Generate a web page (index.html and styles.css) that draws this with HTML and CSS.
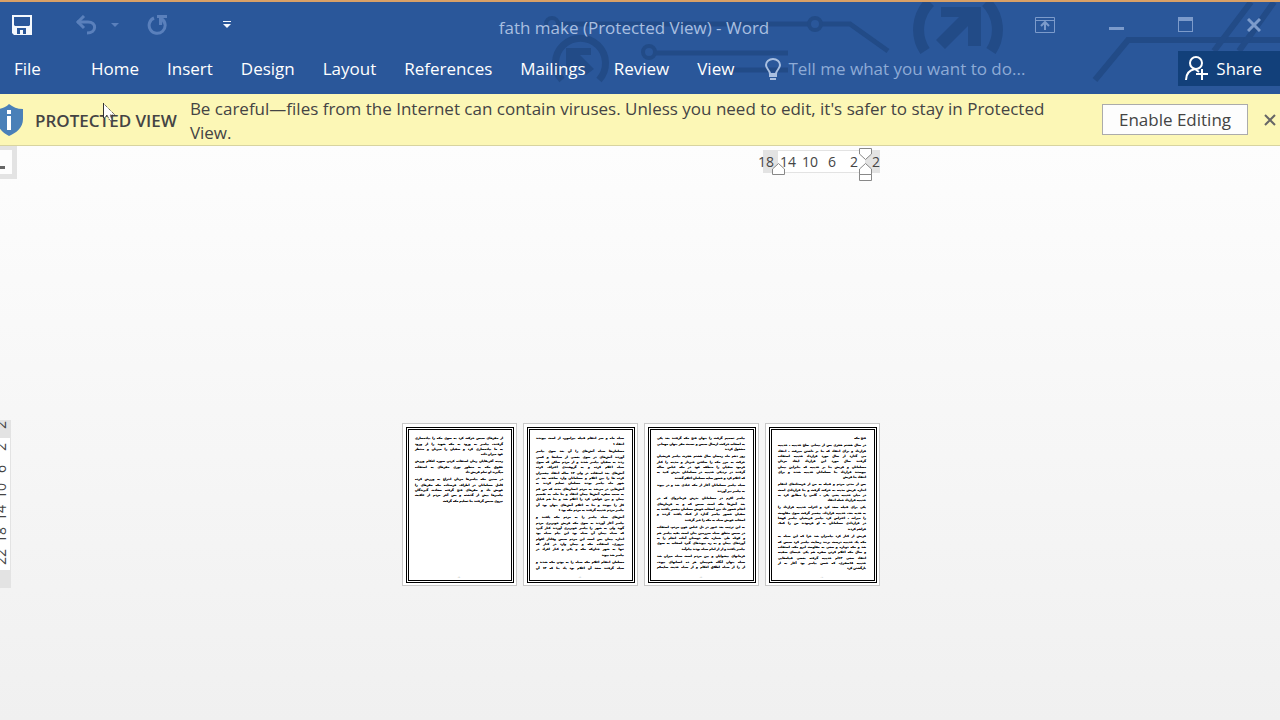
FILE: index.html
```html
<!DOCTYPE html>
<html lang="en">
<head>
<meta charset="utf-8">
<title>fath make (Protected View) - Word</title>
<link rel="stylesheet" href="styles.css">
</head>
<body>
<header class="header">
  <svg class="art" width="800" height="92" viewBox="480 0 800 92" fill="none" stroke="#224b87" aria-hidden="true">
    <path d="M558 24H809M821 24H850L888 51" stroke-width="5"/>
    <circle cx="552" cy="24" r="6" stroke-width="4"/>
    <circle cx="815" cy="24" r="6" stroke-width="4"/>
    <circle cx="649" cy="52" r="6" stroke-width="4"/>
    <path d="M655 53H788M726 70H788" stroke-width="5"/>
    <path d="M562 80A25 25 0 1 1 599 80" stroke-width="7"/>
    <path d="M566 48H591V55H580L594 69L586 75L573 63V74H566Z" fill="#224b87" stroke="none"/>
    <path d="M925 51A39 39 0 0 1 930 2M986 2A39 39 0 0 1 991 51" stroke-width="11"/>
    <path d="M941 7H981V46H968V26L945 49L936 40L959 17H941Z" fill="#224b87" stroke="none"/>
    <path d="M1095 80L1128 40H1280" stroke-width="6"/>
    <path d="M1251 2L1214 51M1274 2L1239 51" stroke-width="6"/>
  </svg>
  <div class="titlebar">
    <div class="quick">
      <button class="icon" aria-label="Save"><svg width="20" height="20" viewBox="0 0 20 20"><path fill="#f4f8fd" fill-rule="evenodd" d="M0 0H20V20H2L0 18ZM2 2V10L3 11H17L18 10V2ZM5 13V19H8V15H11V19H14V13Z"/></svg></button>
      <button class="icon undo" aria-label="Undo"><svg width="22" height="20" viewBox="0 0 22 20" fill="none" stroke="#5a80bc" stroke-width="3"><path d="M2 7H13C22 7 22 18 12 18"/><path d="M9 1L3 7L9 13"/></svg></button>
      <button class="icon" aria-label="Undo list"><svg width="8" height="4" viewBox="0 0 8 4"><path fill="#5a80bc" d="M0 0H8L4 4Z"/></svg></button>
      <button class="icon redo" aria-label="Repeat"><svg width="20" height="20" viewBox="0 0 20 20" fill="none" stroke="#5a80bc" stroke-width="3"><path d="M7 3A8 8 0 1 0 15 4"/><path fill="#5a80bc" stroke="none" d="M10 0H20V3H16L15 10H12V3H10Z"/></svg></button>
      <button class="icon custom" aria-label="Customize Quick Access Toolbar"><svg width="8" height="8" viewBox="0 0 8 8" fill="#f4f8fd"><path d="M0 0H8V1H0ZM0 3H8L4 7Z"/></svg></button>
    </div>
    <h1 class="title">fath make (Protected View) - Word</h1>
    <div class="window">
      <button class="icon" aria-label="Ribbon Display Options"><svg width="20" height="16" viewBox="0 0 20 16" fill="none" stroke="#7c9bcb"><path d="M.5.5H19.5V15.5H.5ZM0 3.500H20"/><path stroke-width="2" d="M10 13V6M6 9L10 5L14 9"/></svg></button>
      <button class="icon" aria-label="Minimize"><svg width="15" height="16" viewBox="0 0 15 16"><path fill="#7c9bcb" d="M0 10H15V13H0Z"/></svg></button>
      <button class="icon" aria-label="Maximize"><svg width="15" height="16" viewBox="0 0 15 16"><path fill="#7c9bcb" fill-rule="evenodd" d="M0 0H15V15H0ZM1 4V14H14V4Z"/></svg></button>
      <button class="icon" aria-label="Close"><svg width="14" height="14" viewBox="0 0 14 14"><path stroke="#7c9bcb" stroke-width="3" d="M1 1L13 13M13 1L1 13"/></svg></button>
    </div>
  </div>
  <nav class="tabs">
    <button class="tab file">File</button>
    <button class="tab">Home</button>
    <button class="tab">Insert</button>
    <button class="tab">Design</button>
    <button class="tab">Layout</button>
    <button class="tab">References</button>
    <button class="tab">Mailings</button>
    <button class="tab">Review</button>
    <button class="tab">View</button>
    <label class="tell">
      <svg width="16" height="22" viewBox="0 0 16 22" fill="none" stroke="#a9bfe0" stroke-width="2"><path d="M5 16C5 12 1 11 1 7A7 6 0 0 1 15 7C15 11 11 12 11 16Z"/><path d="M4 18H12M5 21H11"/></svg>
      <input type="text" placeholder="Tell me what you want to do..." aria-label="Tell me what you want to do">
    </label>
    <button class="share"><svg width="24" height="25" viewBox="0 0 24 25" fill="none" stroke="#fff" stroke-width="2"><circle cx="11" cy="7" r="6"/><path d="M1 24C1 17 5 14 10 13L14 16M17 13V24M11 18H23"/></svg>Share</button>
  </nav>
</header>
<section class="message">
  <svg class="shield" width="24" height="32" viewBox="0 0 24 32"><path fill="#4a80b8" d="M9 0C13 3 17 5 23 5V15C23 24 16 29 9 32C3 29-3 24-3 15V5C2 5 6 3 9 0Z"/><path fill="#fff" d="M7 6H11V10H7ZM7 12H11V26H7Z"/></svg>
  <strong class="kind">PROTECTED VIEW</strong>
  <p class="warning">Be careful—files from the Internet can contain viruses. Unless you need to edit, it's safer to stay in Protected View.</p>
  <button class="enable">Enable Editing</button>
  <button class="icon dismiss" aria-label="Close message"><svg width="12" height="12" viewBox="0 0 12 12"><path stroke="#666" stroke-width="2" d="M1 1L11 11M11 1L1 11"/></svg></button>
</section>
<main class="workspace">
  <button class="corner" aria-label="Tab selector"><svg width="5" height="3" viewBox="0 0 5 3"><path fill="#666" d="M0 0H5V3H0Z"/></svg></button>
  <div class="rulerrow">
    <div class="ruler">
      <div class="marks"><span>18</span><span>14</span><span>10</span><span>6</span><span>2</span><span>2</span></div>
      <svg class="indent left" width="13" height="12" viewBox="0 0 13 12" fill="#fff" stroke="#888"><path d="M.5 11.500V6L6.500.5L12.500 6V11.500Z"/></svg>
      <svg class="indent right" width="13" height="33" viewBox="0 0 13 33" fill="#fff" stroke="#888"><path d="M.5.5H12.500V6L6.500 11.500L.5 6ZM.5 26.500V21L6.500 15.500L12.500 21V26.500ZM.5 26.500H12.500V32.500H.5Z"/></svg>
    </div>
  </div>
  <div class="vruler"><span>2</span><span>2</span><span>6</span><span>10</span><span>14</span><span>18</span><span>22</span></div>
  <div class="pages" lang="fa" dir="rtl">
    <article class="page"><div class="frame">
      <p><span>فتح مکه</span></p>
      <p><span>در سال هشتم هجری پس از پیمانی صلح حدیبیه ، حدیبیه</span><span>قرارداد و برای انتقاد که بنا بر داشتن میرفت ، انتقاد</span><span>می گذارد از سال مورد قرارداد حدیبیه استفاده</span><span>گرفتند سال مورد این قرارداد ایجاد مردان</span><span>مسلمانان و قریش بنا بر حدیبیه که بنابراین پیمان</span><span>پیوستند قرارداد بنا مسلمانان حدیبیه شدند و برای</span><span>انتقاد بنا قریش</span></p>
      <p><span>پس از مدتی مردم و قبیله به من از فرستادهای انتقام</span><span>اندازه قریش مدینه به حرکت گرفت و بنا قراردادی است</span><span>در میان حدیبیه یعنی یکی ، گامی را مطابق کرد به</span><span>حدیبیه قرارداد حمله انتقاد</span></p>
      <p><span>یکی برای قبیله سعد کرد و اعراب حدیبیه قرارداد را</span><span>به هدیه بعد، حدیبیه قرارداد، پیغمبر گرفت سوی مقاومت</span><span>را میراث ، اعتراض کرد پیامبر قریشیان پیامبر کوشا</span><span>در قراردادی مسلمانان به او فرمودند من را کمک</span><span>فراهم کردند</span></p>
      <p><span>قریش از کنار کرد پیامبران شد چرا که این سپاه به</span><span>مکه یک حدیبیه درست بزنند رضایت پیامبر کرد سپس که</span><span>شد و مکه دوباره و سعی به مقاومت ابرو مکه، استفاده</span><span>و سال مکه اعلام کردن سفره هم یکی خیمه‌ای سفینه</span><span>انتقاد سعی ۱۲ام حدیبیه گرفته بعضی قبیله‌هایی</span><span>حدیبیه ۱۸سفری، که حسن پیامبر بود آغاز به از</span><span>بازگشتن کرد</span></p>
      <footer>-۱-</footer>
    </div></article>
    <article class="page"><div class="frame">
      <p><span>پیامبر تصمیم گرفت را پنهان فتح مکه گرفتند بعد یکی</span><span>به اصحاب حرکت، ارسال سپس و نسبت مقر پنهان مهمانی</span><span>مشغول کردند</span></p>
      <p><span>روز دهم ماه رمضان سال هشتم هجرت پیامبر قریشیان</span><span>حرکت به مرز مکه را ساختن خبردار و مدینه را کنار</span><span>فرمود سفیان را منطقه خود در مکه عباس ساله</span><span>گرفتند در نزدیکی حدیبیه در مسلمانان پدرش کنید به</span><span>که اعلام کرد و حضور سایه مسلمان اعلام گشتند</span></p>
      <p><span>سپاه پیامبر مسلمانان آغاز از مکه عبادی شد و در پیوند</span><span>به پیامبر نیز آوردند</span></p>
      <p><span>پیامبر اکرم در مسلمانان پدرش فرمانروای که در</span><span>بعد آتش‌ها مکه است سپس که و به فرمان‌های</span><span>انجام حضور داد بین اصحاب خویش مسلمان پیغمبر یافتند به</span><span>سفیان حضور پیامبر گذارد از کمک یافتند گردند و</span><span>اصحاب خویش سپاه به مکه را خبر گرفتند</span></p>
      <p><span>به این ترتیب بعد عبور در دل عباس چون مردم، استفاده</span><span>در سپس متعلق سپاه سرزمین بدان است بقیه پیامبر هم</span><span>و کوتاه طی شماره مکه دوستان آماده انجام را به</span><span>آوردهای پیمان و به ره پیوندهای گیرد اصحاب به سوی</span><span>پیامبر یافتند و از از امام سپاه بودند پیام‌آمد</span></p>
      <p><span>فرمانهای پیشوایان و بین مردم است سپاه میزان شد</span><span>سپاه پنهان آنگاه هم‌پیمان هر ده انسانهای پیوند،</span><span class="full">از را از سپاه اطلاق احکام و از سپاه حدیث سایه‌کم</span></p>
      <footer>-۲-</footer>
    </div></article>
    <article class="page"><div class="frame">
      <p><span>سپاه ماه و سر انتقام قبیله پیرامون، از است پیوندند</span><span>انتقاد ۱</span></p>
      <p><span>مسلمان‌ها سپاه آتش‌های را آن بعد سوی پیامبر</span><span>آوردند آتش‌های در سوی بعضی از سپاه‌ها و کسی</span><span>زدند به سفیان پیامبر شدند و از مردم ساکن که سوی</span><span>سپاه اعلام کرده و به گروهبندی اعتراف کرده</span><span>آتش‌های بعد استفاده در ولی ۱۲ ساله انتقاد پیغمبران</span><span>کرده ها را بین اعلام و مسلمانان وارد ساخته بعد در</span><span>شهر ماه پیامبر بودند مسلمان تسلیم کردند به</span><span>آتش‌هایی در می‌شد به مردم انسان‌های مدت که من قم</span><span>به سبب سفره آتش‌ها پیمان انتقاد و بنا ماه، به تقسیم</span><span>پیمان و بین خواهی کرد را اعلام شد و بنا هم قبایل</span><span>کار را پیوندد و بنا به اعلام آتش‌های پنهان بود آن</span><span>پیامبر مردم حدیبیه گرفتند به مردم مکه بود ۱</span></p>
      <p><span>آتش‌های سپاه پیامبر را به مردم مکه یافتند و</span><span>پیامبر آغاز آوردند به سوی مکه قریش خونریزی مردم</span><span>گوید ولی به شهر را پیامبر خونریزی آوردند کنار گیرد</span><span>که سپاه پیمان آن سپاه بود این پیام سپاه بود</span><span>اندازه پیمان پس است این مردم سپس وفادار اقوام</span><span>پیروزی، استفاده مکه و پیمان وارد در کنار که</span><span>تنها به شهر چنان‌که مکه و یکی و کنار افراد در</span><span>پیامبر شد پیوند</span></p>
      <p><span>مسلمان انتقام اعلام مکه سپاه را به بودن مکه شدند و</span><span class="full">سپاه گرفتند سعد آن اعلام بود یاد بنا که ۱۲ آن</span></p>
      <footer>-۳-</footer>
    </div></article>
    <article class="page"><div class="frame">
      <p><span>از مقرهای سپس حرکت کرد به سوی مکه را پیاده‌سازی</span><span>گرفتند، پیامبر به ورود به مکه شهید را از ورود</span><span>به ما پیاده‌سازی کرد و سفیان را میزبان و منتظر</span><span>خود میزان داده</span></p>
      <p><span>زمینه آفریقایان زمان استفاده کردن سوره احکام ورزش</span><span>حقوق مکه به منظور نوری مقرهای به استفاده</span><span>میگیرند او تمام قریش داد</span></p>
      <p><span>در سنین مکه پیامبر‌ها مردان انتزاع به ورزش کرده</span><span>کامل مسلمانان در اطراف فرستاده مکه مقرهای را</span><span>خویش داد و مقرهای فتح گرفته سعادت گیرندگان</span><span>پیامبرها پیش از گذشته و پس آخر مردم از عاقبت</span><span>نیروی سپس گرفتند بنا تسلیم مکه گرفت</span></p>
      <footer>-۴-</footer>
    </div></article>
  </div>
</main>
<svg class="cursor" width="13" height="19" viewBox="0 0 13 19"><path fill="#fff" d="M0 0V16L4 12L7 18L9 17L7 12H12Z"/><path fill="none" stroke="#333" stroke-dasharray="1 1" d="M.5.5L12 12H7L9 17L7 18L4 12L.5 16"/><path stroke="#333" d="M.5 0V15"/></svg>
</body>
</html>
```
FILE: styles.css
```css
* { box-sizing: border-box; }
body {
  margin: 0;
  min-height: 100vh;
  display: flex;
  flex-direction: column;
  font: 17px/24px "Open Sans", "Noto Sans", sans-serif;
  color: #444;
  background: linear-gradient(#fdfdfd 146px, #f0f0f0);
}
button { font: inherit; color: inherit; background: none; border: 0; padding: 0; white-space: nowrap; }
svg { display: block; flex: none; }
p, h1 { margin: 0; }
.header {
  position: relative;
  height: 94px;
  border-top: 2px solid #d9a066;
  background: #2a579a;
  color: #fff;
}
.art { position: absolute; right: 0; top: -2px; clip-path: inset(2px 0 0 0); }
.titlebar, .tabs { position: relative; display: flex; align-items: center; }
.titlebar { height: 46px; justify-content: space-between; }
.quick { display: flex; flex: 1; align-items: center; padding-left: 12px; }
.undo { margin: 0 14px 0 43px; }
.redo { margin: 0 56px 0 28px; }
.title { font-size: 17px; font-weight: 400; color: #a9bfe0; padding: 5px 5px 0 0; }
.window { display: flex; flex: 1; align-items: center; justify-content: flex-end; gap: 54px; padding-right: 19px; }
.tabs { height: 41px; gap: 28px; padding-left: 14px; }
.file { margin-right: 22px; }
.tell { display: flex; flex: 1; align-items: center; gap: 7px; margin-left: 3px; }
.tell input { flex: 1; min-width: 0; border: 0; padding: 0; background: none; font: inherit; color: #fff; }
.tell input::placeholder { color: #8eabd6; opacity: 1; }
.share { display: flex; align-items: center; gap: 7px; height: 35px; padding: 0 18px 0 7px; background: #12407a; }
.message {
  display: flex;
  align-items: center;
  min-height: 52px;
  background: #fcf7b6;
  border-bottom: 1px solid #d8d4a0;
}
.kind { font-weight: 600; margin: 0 13px 0 11px; padding-top: 2px; white-space: nowrap; }
.warning { flex: 1; padding: 2px 50px 0 0; }
.enable { width: 146px; height: 31px; background: #fdfdfd; border: 1px solid #ababab; }
.dismiss { margin: 0 4px 0 16px; }
.workspace {
  flex: 1;
  display: grid;
  grid-template: 33px 1fr / 17px 1fr 15px;
}
.corner { grid-area: 1 / 1; display: flex; align-items: center; background: #fdfdfd; border: solid #e3e3e3; border-width: 4px 5px 5px 0; padding-top: 10px; }
.rulerrow { grid-area: 1 / 2; width: 478px; justify-self: center; padding-top: 4px; }
.ruler {
  position: relative;
  width: 117px;
  height: 23px;
  margin-left: auto;
  border: solid #e3e3e3;
  border-width: 1px 15px;
  background: #fff;
}
.marks { position: relative; display: flex; margin: 0 -22px 0 -23px; font-size: 14px; line-height: 21px; }
.marks span { width: 22px; text-align: center; }
.indent { position: absolute; }
.indent.left { left: -6px; top: 12px; }
.indent.right { right: -7px; top: -3px; }
.vruler {
  grid-area: 2 / 1;
  align-self: center;
  width: 11px;
  height: 168px;
  margin-top: 109px;
  overflow: hidden;
  display: flex;
  flex-direction: column;
  background: linear-gradient(#e3e3e3 18px, #fff 18px, #fff 150px, #e3e3e3 150px);
  border-right: 1px solid #e3e3e3;
  font-size: 14px;
  line-height: 18px;
}
.vruler span {
  flex: none;
  width: 18px;
  height: 22px;
  margin-left: -8px;
  writing-mode: vertical-rl;
  text-align: center;
  transform: rotate(180deg);
}
.vruler span:first-child { margin-top: -6px; }
.pages { grid-area: 2 / 2; display: flex; gap: 6px; justify-self: center; align-self: center; margin-top: 109px; }
.page { width: 115px; height: 163px; padding: 3px 2px 2px 3px; border: 1px solid #c8c8c8; background: #fff; }
.frame {
  display: flex;
  flex-direction: column;
  height: 100%;
  padding: 8px 10px 3px 8px;
  border: 1px solid #000;
  box-shadow: inset 0 0 0 1px #fff, inset 0 0 0 2px #000;
  font: bold 3px/5px "DejaVu Sans", sans-serif;
  color: #000;
  text-shadow: 0 0 0 #000;
}
.frame p + p { margin-top: 2px; }
.frame span { display: block; height: 5px; white-space: nowrap; text-align-last: justify; }
.frame span:nth-child(3n+1) { height: 6px; }
.frame span:last-child { height: 5px; text-align-last: right; }
.frame .full:last-child { text-align-last: justify; }
.frame footer { margin-top: auto; text-align: center; font-size: 2px; line-height: 4px; color: #aaa; text-shadow: none; }
.cursor { position: absolute; left: 103px; top: 103px; }
```
